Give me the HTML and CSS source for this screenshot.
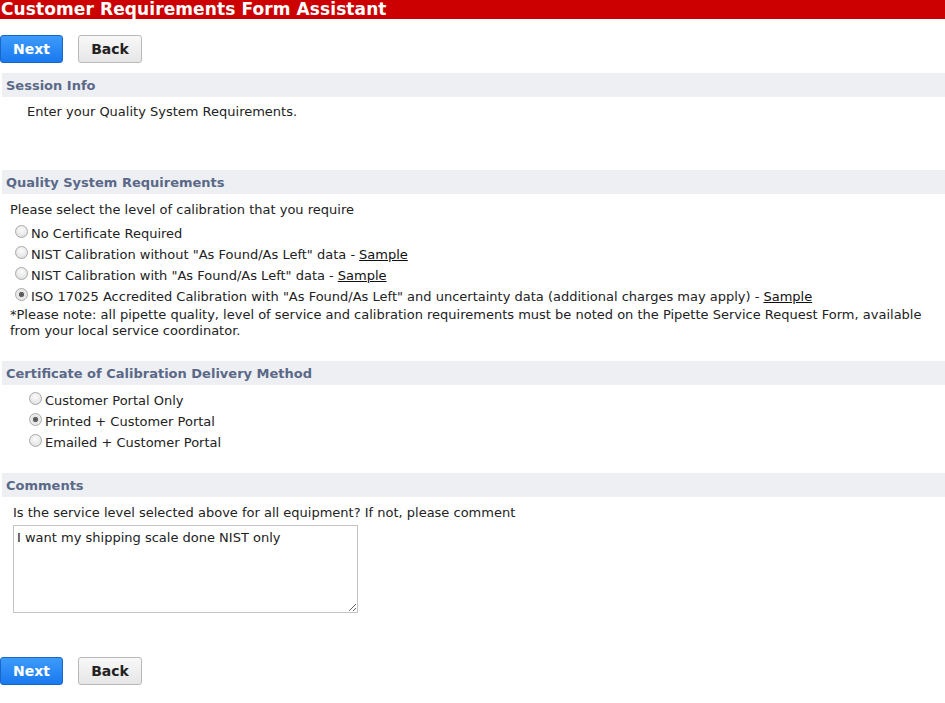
FILE: index.html
```html
<!DOCTYPE html>
<html>
<head>
<meta charset="utf-8">
<link rel="stylesheet" href="styles.css">
</head>
<body>
<h1 class="title">Customer Requirements Form Assistant</h1>
<div class="toolbar">
  <button class="btn btn-next">Next</button>
  <button class="btn btn-back">Back</button>
</div>

<div class="section session">
  <div class="sec-head">Session Info</div>
  <p class="intro">Enter your Quality System Requirements.</p>
</div>

<div class="section quality">
  <div class="sec-head">Quality System Requirements</div>
  <div class="quality-body">
    <p class="prompt">Please select the level of calibration that you require</p>
    <label class="opt"><input type="radio" name="cal"> No Certificate Required</label>
    <label class="opt"><input type="radio" name="cal"> NIST Calibration without "As Found/As Left" data - <a href="#">Sample</a></label>
    <label class="opt"><input type="radio" name="cal"> NIST Calibration with "As Found/As Left" data - <a href="#">Sample</a></label>
    <label class="opt"><input type="radio" name="cal" checked> ISO 17025 Accredited Calibration with "As Found/As Left" and uncertainty data (additional charges may apply) - <a href="#">Sample</a></label>
    <p class="note">*Please note: all pipette quality, level of service and calibration requirements must be noted on the Pipette Service Request Form, available from your local service coordinator.</p>
  </div>
</div>

<div class="section delivery">
  <div class="sec-head">Certificate of Calibration Delivery Method</div>
  <div class="delivery-body">
    <label class="opt"><input type="radio" name="del"> Customer Portal Only</label>
    <label class="opt"><input type="radio" name="del" checked> Printed + Customer Portal</label>
    <label class="opt"><input type="radio" name="del"> Emailed + Customer Portal</label>
  </div>
</div>

<div class="section comments">
  <div class="sec-head">Comments</div>
  <div class="comments-body">
    <p class="prompt">Is the service level selected above for all equipment? If not, please comment</p>
    <textarea class="comment-box">I want my shipping scale done NIST only</textarea>
  </div>
</div>

<div class="toolbar bottom">
  <button class="btn btn-next">Next</button>
  <button class="btn btn-back">Back</button>
</div>
</body>
</html>
```
FILE: styles.css
```css
html, body {
  margin: 0;
  padding: 0;
  background: #ffffff;
}
body {
  font-family: "DejaVu Sans", Verdana, sans-serif;
  font-size: 13px;
  color: #222;
}
.title {
  margin: 0;
  background: #cc0000;
  color: #ffffff;
  font-size: 17px;
  font-weight: bold;
  line-height: 19px;
  height: 19px;
  padding-left: 1px;
  letter-spacing: 0.1px;
  overflow: hidden;
  white-space: nowrap;
}
.toolbar {
  display: flex;
  gap: 15px;
  padding-top: 16px;
}
.toolbar.bottom {
  padding-top: 44px;
}
.btn {
  font-family: "DejaVu Sans", Verdana, sans-serif;
  font-size: 14px;
  font-weight: bold;
  height: 28px;
  padding: 0;
  border-radius: 3px;
  cursor: pointer;
}
.btn-next {
  width: 63px;
  color: #ffffff;
  background: linear-gradient(#3d9bfb, #1a79ef);
  border: 1px solid #1866c6;
}
.btn-back {
  width: 64px;
  color: #222;
  background: linear-gradient(#f8f8f8, #e6e6e6);
  border: 1px solid #b9b9b9;
}
.section {
  margin-top: 10px;
}
.sec-head {
  margin-left: 2px;
  height: 24px;
  line-height: 25px;
  padding-left: 4px;
  background: #eeeff3;
  color: #5a6988;
  font-weight: bold;
  font-size: 13px;
}
.intro {
  margin: 6px 0 0 27px;
  line-height: 18px;
  height: 67px;
}
.session + .quality {
  margin-top: 0;
}
.quality-body {
  padding: 7px 0 0 10px;
}
.prompt {
  margin: 0;
  line-height: 18px;
}
.opt {
  display: flex;
  align-items: center;
  height: 21px;
  white-space: nowrap;
}
.quality-body .opt {
  padding-left: 3px;
}
.quality-body .prompt {
  margin-bottom: 4px;
}
.opt input {
  -webkit-appearance: none;
  appearance: none;
  margin: 0 3px 0 2px;
  width: 13px;
  height: 13px;
  border-radius: 50%;
  border: 1px solid #a9a9a9;
  background: radial-gradient(circle at 50% 35%, #fbfbfb 0%, #e8e8e8 60%, #d4d4d4 100%);
  box-sizing: border-box;
  position: relative;
  top: -2px;
}
.opt input:checked {
  background: radial-gradient(circle, #555 0, #666 2.3px, #e4e4e4 3px, #f4f4f4 100%);
}
.opt a {
  color: #111;
  text-decoration: underline;
  margin-left: 4px;
}
.note {
  margin: 0;
  line-height: 16px;
}
.delivery {
  margin-top: 22px;
}
.delivery-body {
  padding: 5px 0 0 27px;
}
.comments {
  margin-top: 20px;
}
.comments-body {
  padding: 7px 0 0 13px;
}
.comment-box {
  display: block;
  margin-top: 3px;
  width: 345px;
  height: 88px;
  box-sizing: border-box;
  border: 1px solid #c4c4c4;
  font-family: "DejaVu Sans", Verdana, sans-serif;
  font-size: 13px;
  color: #222;
  padding: 4px 3px;
  resize: both;
}
```
